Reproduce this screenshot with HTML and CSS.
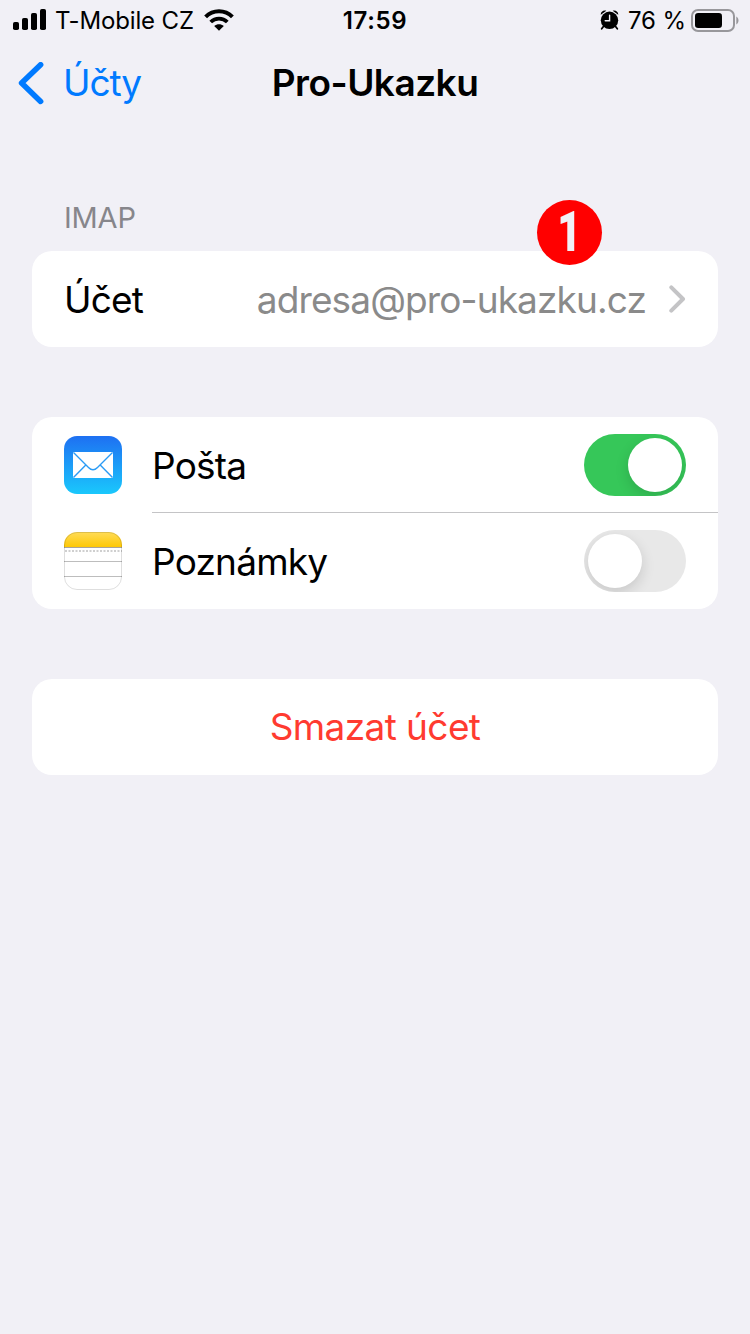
FILE: index.html
```html
<!DOCTYPE html>
<html lang="cs">
<head>
    <meta charset="UTF-8">
    <meta name="viewport" content="width=device-width, initial-scale=1.0">
    <title>Pro-Ukazku</title>
    <link rel="stylesheet" href="styles.css">
</head>
<body>
    <div class="status-bar">
        <div class="status-left">
            <svg class="signal" width="34" height="22" viewBox="0 0 34 22">
                <rect x="0" y="13" width="6" height="8" rx="1.8"/>
                <rect x="9" y="9" width="6" height="12" rx="1.8"/>
                <rect x="18" y="4" width="6" height="17" rx="1.8"/>
                <rect x="27" y="0" width="6" height="21" rx="1.8"/>
            </svg>
            <span class="carrier">T-Mobile CZ</span>
            <svg class="wifi" width="30" height="22" viewBox="0 0 30 22">
                <path d="M1.6 7.8C9 .4 21 .4 28.4 7.8" fill="none" stroke="#000" stroke-width="4"/>
                <path d="M6.7 13C11.3 8.5 18.7 8.5 23.3 13" fill="none" stroke="#000" stroke-width="3.8"/>
                <path d="M10.2 17C13 14.5 17 14.5 19.8 17L15 21.8Z"/>
            </svg>
        </div>
        <span class="clock">17:59</span>
        <div class="status-right">
            <svg class="alarm" width="19" height="20" viewBox="0 0 19 20">
                <circle cx="9.5" cy="10.3" r="8.7"/>
                <path d="M.8 4.8C.3 2.2 3.4-.4 6.3.8ZM18.2 4.8C18.7 2.2 15.6-.4 12.7.8Z"/>
                <path d="M3.8 16L1.7 18.7M15.2 16L17.3 18.7" stroke="#000" stroke-width="1.8" stroke-linecap="round"/>
                <path d="M9.6 5.2V10.7H5.2" fill="none" stroke="#f1f0f6" stroke-width="1.4" stroke-linecap="round"/>
            </svg>
            <span class="percent">76 %</span>
            <svg class="battery" width="48" height="23" viewBox="0 0 48 23">
                <rect x="1" y="1" width="42" height="21" rx="6" fill="none" stroke="#98979b" stroke-width="2"/>
                <rect x="4" y="4" width="27" height="15" rx="3.2"/>
                <path d="M45.3 7.5C48.2 9 48.2 14 45.3 15.5Z" fill="#98979b"/>
            </svg>
        </div>
    </div>
    <div class="navbar">
        <a class="back" href="#">
            <svg width="26" height="43" viewBox="0 0 26 43">
                <path d="M22.6 2.8L3.6 21L22.6 39.4" fill="none" stroke="#007aff" stroke-width="5.6" stroke-linecap="round" stroke-linejoin="round"/>
            </svg>
            <span>Účty</span>
        </a>
        <h1>Pro-Ukazku</h1>
    </div>
    <div class="content">
        <h2 class="section-title">IMAP</h2>
        <div class="card account">
            <div class="row">
                <span class="label label-account">Účet</span>
                <span class="value">adresa@pro-ukazku.cz</span>
                <svg class="chevron" width="18" height="28" viewBox="0 0 18 28">
                    <path d="M2.3 2.3L14 14L2.3 25.7" fill="none" stroke="#c4c4c6" stroke-width="4" stroke-linecap="round" stroke-linejoin="round"/>
                </svg>
            </div>
            <div class="badge"><span>1</span></div>
        </div>
        <div class="card">
            <div class="row">
                <svg class="app-icon" width="58" height="58" viewBox="0 0 58 58">
                    <defs>
                        <linearGradient id="mail" x1="0" y1="0" x2="0" y2="1">
                            <stop offset="0" stop-color="#1e70f2"/>
                            <stop offset="1" stop-color="#1ac8fc"/>
                        </linearGradient>
                    </defs>
                    <rect width="58" height="58" rx="13" fill="url(#mail)"/>
                    <rect x="9" y="16" width="40" height="26" rx="1" fill="#fff"/>
                    <path d="M9.5 16.5L24.5 31.5Q29 36 33.5 31.5L48.5 16.5M9.5 41.5L21.8 29M48.5 41.5L36.2 29" fill="none" stroke="#2b9bf5" stroke-width="1.4"/>
                </svg>
                <span class="label label-mail">Pošta</span>
                <span class="switch on"></span>
            </div>
            <div class="divider"></div>
            <div class="row">
                <svg class="app-icon" width="58" height="58" viewBox="0 0 58 58">
                    <defs>
                        <linearGradient id="notes" x1="0" y1="0" x2="0" y2="1">
                            <stop offset="0" stop-color="#ffdc58"/>
                            <stop offset="1" stop-color="#fec805"/>
                        </linearGradient>
                        <clipPath id="notes-shape">
                            <rect width="58" height="58" rx="13"/>
                        </clipPath>
                    </defs>
                    <g clip-path="url(#notes-shape)">
                        <rect width="58" height="58" fill="#fff"/>
                        <rect width="58" height="15" fill="url(#notes)"/>
                        <path d="M0 15.5H58" stroke="#a9a499" stroke-width="1.2"/>
                        <path d="M1 19H58" stroke="#cfcfcf" stroke-width="2" stroke-dasharray="2 1.5"/>
                        <path d="M0 29.5H58M0 44.5H58" stroke="#bdbdbd" stroke-width="1"/>
                    </g>
                    <rect x=".5" y=".5" width="57" height="57" rx="12.5" fill="none" stroke="#000" stroke-opacity=".13"/>
                </svg>
                <span class="label label-notes">Poznámky</span>
                <span class="switch"></span>
            </div>
        </div>
        <div class="card">
            <a class="row delete" href="#">Smazat účet</a>
        </div>
    </div>
</body>
</html>
```
FILE: styles.css
```css
* {
    box-sizing: border-box;
}
body {
    background-color: #f1f0f6;
    color: #000;
    font-family: Inter, "Liberation Sans", sans-serif;
    margin: 0;
    min-height: 1334px;
}
a {
    text-decoration: none;
}
svg {
    display: block;
    flex: none;
}
.status-bar {
    display: grid;
    grid-template-columns: 1fr auto 1fr;
    align-items: center;
    height: 40px;
    padding: 0 11px 0 13px;
    font-size: 24px;
    line-height: 40px;
}
.status-bar span {
    padding-top: 2px;
    line-height: 38px;
}
.status-left, .status-right {
    display: flex;
    align-items: center;
    white-space: nowrap;
}
.status-right {
    justify-content: flex-end;
}
.carrier {
    margin: 0 10px 0 8px;
    letter-spacing: -0.15px;
}
.clock {
    margin-right: 2px;
    font-weight: 600;
    letter-spacing: 0.6px;
}
.percent {
    margin: 0 5px 0 9px;
    letter-spacing: -0.1px;
}
.navbar {
    display: grid;
    grid-template-columns: 1fr auto 1fr;
    align-items: center;
    height: 86px;
    padding: 0 18px;
}
.back {
    display: flex;
    align-items: center;
    gap: 19px;
    color: #007aff;
    font-size: 37px;
    letter-spacing: -1.1px;
}
.back span, .navbar h1 {
    padding-bottom: 2px;
}
.navbar h1 {
    margin: 0;
    font-size: 37px;
    font-weight: 600;
    letter-spacing: -0.5px;
}
.content {
    padding: 74px 32px 0;
}
.section-title {
    margin: 0 0 15px;
    padding-left: 32px;
    color: #87868b;
    font-size: 29px;
    font-weight: 400;
    letter-spacing: -0.2px;
    line-height: 36px;
}
.card {
    background-color: #fff;
    border-radius: 20px;
    margin-bottom: 70px;
    font-size: 37px;
}
.row {
    display: flex;
    align-items: center;
    height: 96px;
    padding: 0 32px;
}
.divider {
    height: 1px;
    margin: -1px 0 0 120px;
    background-color: #c4c4c6;
}
.app-icon {
    margin-right: 30px;
}
.label {
    flex: 1;
    letter-spacing: -0.8px;
}
.value {
    color: #8a8a8a;
    letter-spacing: -0.88px;
}
.chevron {
    margin-left: 23px;
    margin-right: -1px;
}
.account {
    position: relative;
}
/* number marker over the card edge */
.badge {
    display: flex;
    justify-content: center;
    position: absolute;
    top: -51px;
    left: 504.5px;
    width: 65px;
    height: 65px;
    border-radius: 50%;
    background-color: #f00;
    color: #f1f0f6;
    font-family: Roboto, sans-serif;
    font-size: 56px;
    font-weight: 900;
    line-height: 64px;
}
.badge span {
    transform: scaleX(0.74);
}
.switch {
    width: 102px;
    height: 62px;
    padding: 4px;
    border-radius: 31px;
    background-color: #e8e8e8;
    overflow: hidden;
}
.switch::before {
    content: "";
    display: block;
    width: 54px;
    height: 54px;
    border-radius: 50%;
    background-color: #fff;
    box-shadow: 0 5px 14px rgba(0, 0, 0, 0.14);
}
.switch.on {
    background-color: #36c759;
}
.switch.on::before {
    margin-left: auto;
}
.delete {
    justify-content: center;
    padding-bottom: 2px;
    color: #ff3b30;
    letter-spacing: -0.6px;
}
```
